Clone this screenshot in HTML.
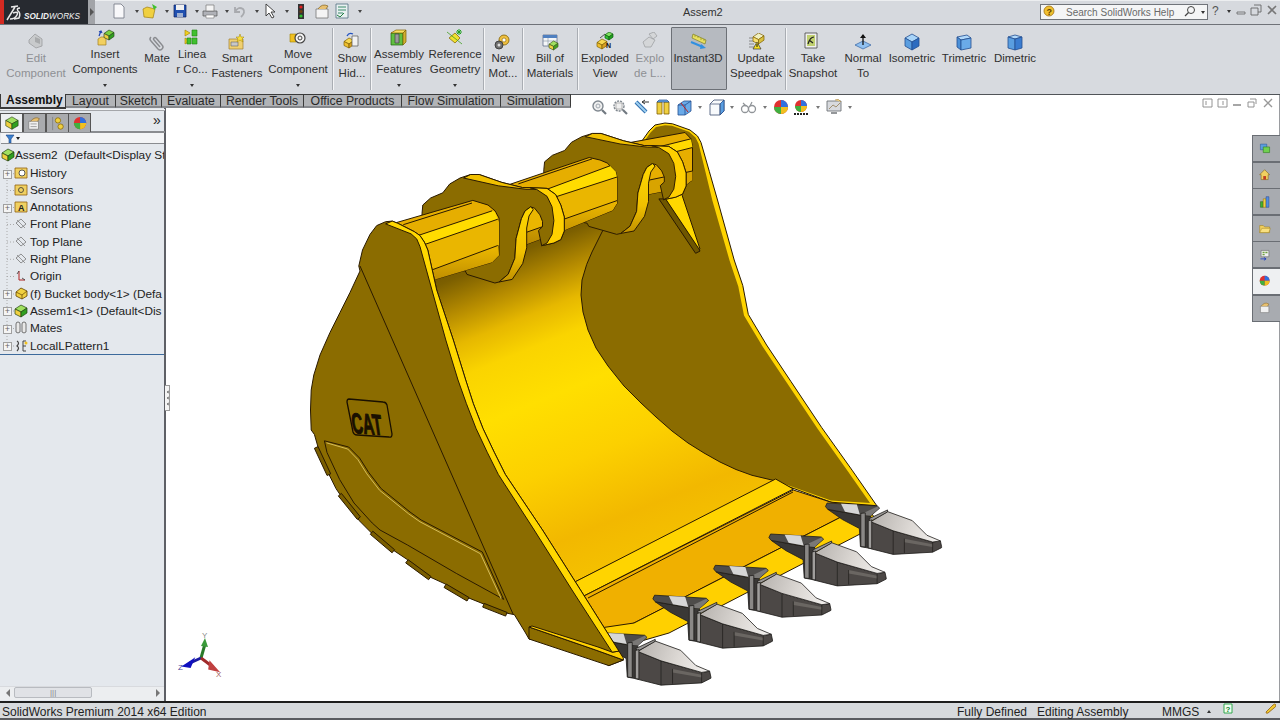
<!DOCTYPE html>
<html><head><meta charset="utf-8"><style>
*{margin:0;padding:0;box-sizing:border-box}
html,body{width:1280px;height:720px;overflow:hidden;background:#fff;font-family:"Liberation Sans",sans-serif;color:#222}
.a{position:absolute}
#title{left:0;top:0;width:1280px;height:25px;background:#d6d9de;border-top:1px solid #eceef0;border-bottom:1px solid #6f7278}
#logo{left:0;top:0;width:88px;height:24px;background:#272a30;border-left:4px solid #d42a22}
#logoarr{left:88px;top:0;width:7px;height:24px;background:#a2a4a8}
#tb{left:0;top:25px;width:1280px;height:70px;background:#d7dadf;border-bottom:1px solid #505458}
.l{position:absolute;font-size:11.5px;line-height:15px;color:#303030;white-space:nowrap;transform:translateX(-50%)}
.g{color:#8e9094}
.sep{position:absolute;top:28px;width:2px;height:62px;border-left:1px solid #a9adb3;border-right:1px solid #f4f5f7}
.dd{position:absolute;width:0;height:0;border-left:2px solid transparent;border-right:2px solid transparent;border-top:3px solid #333}
#tabs{left:0;top:94px;width:570px;height:14px;background:#d7dadf}
.tab{position:absolute;top:94px;height:14px;font-size:12.3px;line-height:12px;color:#2a2a2a;background:#b2b4b7;border:1px solid #3a3a3a;border-bottom:2px solid #86888c;border-left:none;border-top-width:1px;text-align:center}
#panel{left:0;top:108px;width:165px;height:593px;background:#e4e8ed}
#pborder{left:164px;top:107px;width:2px;height:594px;background:#5e6066}
#status{left:0;top:701px;width:1280px;height:19px;background:#d7dadd;border-top:2px solid #1e1e1e;border-bottom:2px solid #5a5c60}
.st{position:absolute;top:704px;font-size:12px;line-height:16px;color:#222;white-space:nowrap}
.tr{position:absolute;left:30px;font-size:11.8px;line-height:15px;color:#222;white-space:nowrap}
.ptab{position:absolute;top:113px;width:23px;height:19px;background:#a9abae;border:1px solid #555;border-bottom:none}
.tp{position:absolute;left:1252px;width:28px;height:27px;background:#a8abb0;border:1px solid #6a6e74;border-right:none}
</style></head><body>
<div id="title" class="a"></div>
<div id="logo" class="a"></div>
<div id="logoarr" class="a"></div>
<div id="tb" class="a"></div>
<div id="tabs" class="a"></div>
<div id="panel" class="a"></div>
<div id="pborder" class="a"></div>
<div id="status" class="a"></div>
<div class="a" style="left:683px;top:5px;font-size:11px;line-height:14px;color:#333">Assem2</div>
<svg class="a" style="left:4px;top:0" width="84" height="24" viewBox="0 0 84 24"><path d="M3,20 L11,7 M7,7 L14,6 M9,13 Q15,11 13,15 Q11,19 6,19 M16,8 Q12,8 14,11 Q17,13 15,18 L10,19" fill="none" stroke="#e8e8e8" stroke-width="1.5"/><text x="20" y="18.5" font-family="Liberation Sans" font-style="italic" font-size="9.8" fill="#f2f2f2" textLength="56" lengthAdjust="spacingAndGlyphs"><tspan font-weight="bold">SOLID</tspan>WORKS</text></svg>
<svg class="a" style="left:89px;top:8px" width="6" height="8"><path d="M1,0 L5,4 L1,8 Z" fill="#555"/></svg>
<div class="a" style="left:671px;top:27px;width:56px;height:63px;background:#b6bac0;border:1px solid #6c7076;border-radius:1px"></div>
<div class="l g" style="left:36px;top:51px">Edit</div>
<div class="l g" style="left:36px;top:66px">Component</div>
<div class="l" style="left:105px;top:47px">Insert</div>
<div class="l" style="left:105px;top:62px">Components</div>
<div class="l" style="left:157px;top:51px">Mate</div>
<div class="l" style="left:192px;top:47px">Linea</div>
<div class="l" style="left:192px;top:62px">r Co...</div>
<div class="l" style="left:237px;top:51px">Smart</div>
<div class="l" style="left:237px;top:66px">Fasteners</div>
<div class="l" style="left:298px;top:47px">Move</div>
<div class="l" style="left:298px;top:62px">Component</div>
<div class="l" style="left:352px;top:51px">Show</div>
<div class="l" style="left:352px;top:66px">Hid...</div>
<div class="l" style="left:399px;top:47px">Assembly</div>
<div class="l" style="left:399px;top:62px">Features</div>
<div class="l" style="left:455px;top:47px">Reference</div>
<div class="l" style="left:455px;top:62px">Geometry</div>
<div class="l" style="left:503px;top:51px">New</div>
<div class="l" style="left:503px;top:66px">Mot...</div>
<div class="l" style="left:550px;top:51px">Bill of</div>
<div class="l" style="left:550px;top:66px">Materials</div>
<div class="l" style="left:605px;top:51px">Exploded</div>
<div class="l" style="left:605px;top:66px">View</div>
<div class="l g" style="left:650px;top:51px">Explo</div>
<div class="l g" style="left:650px;top:66px">de L...</div>
<div class="l" style="left:698px;top:51px">Instant3D</div>
<div class="l" style="left:756px;top:51px">Update</div>
<div class="l" style="left:756px;top:66px">Speedpak</div>
<div class="l" style="left:813px;top:51px">Take</div>
<div class="l" style="left:813px;top:66px">Snapshot</div>
<div class="l" style="left:863px;top:51px">Normal</div>
<div class="l" style="left:863px;top:66px">To</div>
<div class="l" style="left:912px;top:51px">Isometric</div>
<div class="l" style="left:964px;top:51px">Trimetric</div>
<div class="l" style="left:1015px;top:51px">Dimetric</div>
<div class="dd" style="left:103px;top:84px"></div>
<div class="dd" style="left:190px;top:84px"></div>
<div class="dd" style="left:296px;top:84px"></div>
<div class="dd" style="left:397px;top:84px"></div>
<div class="dd" style="left:453px;top:84px"></div>
<div class="sep" style="left:332px"></div>
<div class="sep" style="left:370px"></div>
<div class="sep" style="left:483px"></div>
<div class="sep" style="left:522px"></div>
<div class="sep" style="left:577px"></div>
<div class="sep" style="left:785px"></div>
<svg class="a" style="left:27.0px;top:32.0px" width="18" height="18" viewBox="0 0 18 18"><path d="M2,8 L8,2 L15,7 L15,14 L9,16 L2,11 Z" fill="#c8cacc" stroke="#9a9c9e" stroke-width="0.8"/><path d="M8,5 L13,7 L13,12 L8,10 Z" fill="#a8aaac"/></svg>
<svg class="a" style="left:97.0px;top:29.0px" width="18" height="18" viewBox="0 0 18 18"><path d="M1,10 L4,8 L9,8 L9,16 L1,16 Z" fill="#f2d060" stroke="#a08020" stroke-width="0.7"/><path d="M2,7 L4,2 M2,3 L4,2 L5,4" fill="none" stroke="#1a40b0" stroke-width="1.2"/><path d="M7,4.5 L12.0,1 L17,3.5 L12.0,7.0 Z" fill="#7ad040" stroke="#2a4a20" stroke-width="0.7" stroke-linejoin="round"/><path d="M7,4.5 L12.0,7.0 L12.0,11 L7,8.5 Z" fill="#f0d040" stroke="#2a4a20" stroke-width="0.7" stroke-linejoin="round"/><path d="M12.0,7.0 L17,3.5 L17,7.5 L12.0,11 Z" fill="#30a020" stroke="#2a4a20" stroke-width="0.7" stroke-linejoin="round"/></svg>
<svg class="a" style="left:147.0px;top:34.0px" width="18" height="18" viewBox="0 0 18 18"><path d="M4,3 Q2,5 4,7 L11,15 Q13,17 15,15 Q17,13 15,11 L9,4 Q8,3 7,4 Q6,5 7,6 L13,13" fill="none" stroke="#8a8c90" stroke-width="1.5"/></svg>
<svg class="a" style="left:183.0px;top:29.0px" width="18" height="18" viewBox="0 0 18 18"><path d="M2,1 L7,4 L2,7 Z M2,9 L7,12 L2,15 Z" fill="#f0d020" stroke="#a08000" stroke-width="0.6"/><path d="M9,1 h5 v6 h-5 Z M9,9 h5 v6 h-5 Z M4,9 h4 v6 h-4 Z" fill="#40c030" stroke="#208010" stroke-width="0.6"/></svg>
<svg class="a" style="left:228.0px;top:33.0px" width="18" height="18" viewBox="0 0 18 18"><path d="M1,6 L15,6 L15,16 L1,16 Z" fill="#f0d070" stroke="#a08030" stroke-width="0.7"/><path d="M3,9 h7 v4 h-7 Z" fill="#c8c8c8" stroke="#666" stroke-width="0.6"/><path d="M12,1 L13,4 L16,4 L14,6 L15,9 L12,7 L9,9 L10,6 L8,4 L11,4 Z" fill="#f8e040" stroke="#a08000" stroke-width="0.5"/></svg>
<svg class="a" style="left:289.0px;top:29.0px" width="18" height="18" viewBox="0 0 18 18"><path d="M1,5 L7,5 L7,13 L1,13 Z" fill="#f0c020" stroke="#a08000" stroke-width="0.6"/><circle cx="11" cy="9" r="5" fill="#f4f4f4" stroke="#444" stroke-width="1.2"/><circle cx="11" cy="9" r="2" fill="none" stroke="#444" stroke-width="1"/></svg>
<svg class="a" style="left:343.0px;top:32.0px" width="18" height="18" viewBox="0 0 18 18"><path d="M1,9.5 L6.0,6 L11,8.5 L6.0,12.0 Z" fill="#f8d850" stroke="#806000" stroke-width="0.7" stroke-linejoin="round"/><path d="M1,9.5 L6.0,12.0 L6.0,16 L1,13.5 Z" fill="#f0c030" stroke="#806000" stroke-width="0.7" stroke-linejoin="round"/><path d="M6.0,12.0 L11,8.5 L11,12.5 L6.0,16 Z" fill="#d8a020" stroke="#806000" stroke-width="0.7" stroke-linejoin="round"/><path d="M9,4 h6 v10 h-6 Z" fill="#f2f2f2" stroke="#555" stroke-width="0.7"/><path d="M4,4 Q6,0 10,2" fill="none" stroke="#2050c0" stroke-width="1.3"/></svg>
<svg class="a" style="left:390.0px;top:29.0px" width="18" height="18" viewBox="0 0 18 18"><path d="M1,4 L13,4 L13,16 L1,16 Z" fill="#60c040" stroke="#206010" stroke-width="0.7"/><path d="M1,4 L6,1 L16,1 L13,4 Z" fill="#f8e060" stroke="#806000" stroke-width="0.7"/><path d="M13,4 L16,1 L16,13 L13,16 Z" fill="#d0b030" stroke="#806000" stroke-width="0.7"/><path d="M5,5 h4 v9 h-4 Z" fill="#9a9a9a" stroke="#444" stroke-width="0.7"/></svg>
<svg class="a" style="left:446.0px;top:29.0px" width="18" height="18" viewBox="0 0 18 18"><path d="M3,9 L9,4 L14,9 L9,14 Z" fill="#f0e030" stroke="#806000" stroke-width="0.7"/><path d="M1,3 L16,15" stroke="#40a020" stroke-width="0.8"/><path d="M13,0 v6 M10,3 h6 M11,1 l4,4 M15,1 l-4,4" stroke="#20a020" stroke-width="1"/></svg>
<svg class="a" style="left:494.0px;top:33.0px" width="18" height="18" viewBox="0 0 18 18"><circle cx="10" cy="7" r="5" fill="#f0c040" stroke="#806000" stroke-width="0.8"/><circle cx="10" cy="7" r="2" fill="#fff" stroke="#806000" stroke-width="0.6"/><circle cx="5" cy="12" r="4" fill="#707070" stroke="#303030" stroke-width="0.8"/><circle cx="5" cy="12" r="1.5" fill="#ddd"/></svg>
<svg class="a" style="left:541.0px;top:33.0px" width="18" height="18" viewBox="0 0 18 18"><path d="M2,2 h14 v11 h-14 Z" fill="#f4f6f8" stroke="#506080" stroke-width="0.7"/><path d="M2,2 h14 v3 h-14 Z" fill="#5080c0"/><path d="M2,8 h14 M7,5 v8" stroke="#8090a0" stroke-width="0.6"/><path d="M8,11.15 L12.5,8 L17,10.25 L12.5,13.399999999999999 Z" fill="#a0e060" stroke="#406020" stroke-width="0.7" stroke-linejoin="round"/><path d="M8,11.15 L12.5,13.399999999999999 L12.5,17 L8,14.75 Z" fill="#f0d040" stroke="#406020" stroke-width="0.7" stroke-linejoin="round"/><path d="M12.5,13.399999999999999 L17,10.25 L17,13.850000000000001 L12.5,17 Z" fill="#40a020" stroke="#406020" stroke-width="0.7" stroke-linejoin="round"/></svg>
<svg class="a" style="left:596.0px;top:32.0px" width="18" height="18" viewBox="0 0 18 18"><path d="M1,10.5 L6.0,7 L11,9.5 L6.0,13.0 Z" fill="#f8d850" stroke="#806000" stroke-width="0.7" stroke-linejoin="round"/><path d="M1,10.5 L6.0,13.0 L6.0,17 L1,14.5 Z" fill="#f0c030" stroke="#806000" stroke-width="0.7" stroke-linejoin="round"/><path d="M6.0,13.0 L11,9.5 L11,13.5 L6.0,17 Z" fill="#d8a020" stroke="#806000" stroke-width="0.7" stroke-linejoin="round"/><path d="M4,6 L9,2" stroke="#555" stroke-width="1"/><path d="M9,2.8 L13.0,0 L17,2.0 L13.0,4.8 Z" fill="#80e060" stroke="#106010" stroke-width="0.7" stroke-linejoin="round"/><path d="M9,2.8 L13.0,4.8 L13.0,8 L9,6.0 Z" fill="#30c030" stroke="#106010" stroke-width="0.7" stroke-linejoin="round"/><path d="M13.0,4.8 L17,2.0 L17,5.2 L13.0,8 Z" fill="#20a020" stroke="#106010" stroke-width="0.7" stroke-linejoin="round"/><text x="10" y="16" font-size="7" font-weight="bold" fill="#111" font-family="Liberation Sans">N</text></svg>
<svg class="a" style="left:641.0px;top:32.0px" width="18" height="18" viewBox="0 0 18 18"><path d="M2,10 L8,5 L14,8 L10,15 L4,15 Z M8,2 L13,0 L16,4 L12,7 Z" fill="#d4d6d8" stroke="#a0a2a4" stroke-width="0.8"/></svg>
<svg class="a" style="left:690.0px;top:32.0px" width="18" height="18" viewBox="0 0 18 18"><path d="M3,2 L16,8 L15,12 L2,6 Z" fill="#e8e060" stroke="#808020" stroke-width="0.7"/><path d="M5,3 v2 M8,4 v2 M11,6 v2 M14,7 v2" stroke="#808020" stroke-width="0.6"/><path d="M1,10 L13,15" stroke="#3090e0" stroke-width="2"/><path d="M11,12 L16,16 L10,17 Z" fill="#3090e0"/></svg>
<svg class="a" style="left:748.0px;top:33.0px" width="18" height="18" viewBox="0 0 18 18"><path d="M1,5 h5 M1,8 h5 M1,11 h5 M1,14 h5" stroke="#666" stroke-width="0.7"/><path d="M5,3.8499999999999996 L10.5,0 L16,2.75 L10.5,6.6 Z" fill="#f0f0c0" stroke="#806000" stroke-width="0.7" stroke-linejoin="round"/><path d="M5,3.8499999999999996 L10.5,6.6 L10.5,11 L5,8.25 Z" fill="#f8e070" stroke="#806000" stroke-width="0.7" stroke-linejoin="round"/><path d="M10.5,6.6 L16,2.75 L16,7.15 L10.5,11 Z" fill="#d8c040" stroke="#806000" stroke-width="0.7" stroke-linejoin="round"/><path d="M9,9 L13,16 L5,16 Z" fill="#f8e020" stroke="#333" stroke-width="0.7"/><path d="M9,11 v3" stroke="#111" stroke-width="1"/></svg>
<svg class="a" style="left:803.0px;top:32.0px" width="18" height="18" viewBox="0 0 18 18"><path d="M2,1 h12 v15 h-12 Z" fill="#f0f0f0" stroke="#444" stroke-width="0.8"/><path d="M4,3 h8 v11 h-8 Z" fill="#c0d070"/><path d="M5,12 Q7,5 11,5 M6,8 L10,11" stroke="#222" stroke-width="1.2" fill="none"/></svg>
<svg class="a" style="left:854.0px;top:33.0px" width="18" height="18" viewBox="0 0 18 18"><path d="M1,12 L9,8 L17,12 L9,16 Z" fill="#90c0f0" stroke="#3060a0" stroke-width="0.7"/><path d="M9,12 V2" stroke="#111" stroke-width="1.3"/><path d="M6,5 L9,1 L12,5 Z" fill="#111"/></svg>
<svg class="a" style="left:903.0px;top:33.0px" width="18" height="18" viewBox="0 0 18 18"><path d="M2,5 L9,1 L16,5 L9,9 Z" fill="#a8d4f8" stroke="#234e90" stroke-width="0.8" stroke-linejoin="round"/><path d="M2,5 L9,9 L9,17 L2,13 Z" fill="#5a9ee0" stroke="#234e90" stroke-width="0.8" stroke-linejoin="round"/><path d="M9,9 L16,5 L16,13 L9,17 Z" fill="#2d6cc0" stroke="#234e90" stroke-width="0.8" stroke-linejoin="round"/></svg>
<svg class="a" style="left:955.0px;top:33.0px" width="18" height="18" viewBox="0 0 18 18"><path d="M2,4 L12,2 L16,5 L6,7 Z" fill="#b0d8fa" stroke="#234e90" stroke-width="0.8"/><path d="M2,4 L6,7 L6,17 L2,14 Z" fill="#4a90d8" stroke="#234e90" stroke-width="0.8"/><path d="M6,7 L16,5 L16,15 L6,17 Z" fill="#6aaae8" stroke="#234e90" stroke-width="0.8"/></svg>
<svg class="a" style="left:1006.0px;top:33.0px" width="18" height="18" viewBox="0 0 18 18"><path d="M2,4 L9,2 L16,4 L9,6 Z" fill="#b0d8fa" stroke="#234e90" stroke-width="0.8"/><path d="M2,4 L9,6 L9,17 L2,15 Z" fill="#5a9ee0" stroke="#234e90" stroke-width="0.8"/><path d="M9,6 L16,4 L16,15 L9,17 Z" fill="#3a7cd0" stroke="#234e90" stroke-width="0.8"/></svg>
<svg class="a" style="left:111.0px;top:3.0px" width="16" height="16" viewBox="0 0 16 16"><path d="M3,1 L10,1 L13,4 L13,15 L3,15 Z" fill="#f8f8fa" stroke="#707480" stroke-width="0.8"/></svg>
<svg class="a" style="left:142.0px;top:3.0px" width="16" height="16" viewBox="0 0 16 16"><path d="M1,6 L5,4 L13,6 L11,15 L2,14 Z" fill="#f0d040" stroke="#a08010" stroke-width="0.7"/><path d="M10,1 L15,4 L12,7 Z" fill="#40c030"/></svg>
<svg class="a" style="left:172.0px;top:3.0px" width="16" height="16" viewBox="0 0 16 16"><path d="M2,2 h12 v12 h-12 Z" fill="#2050b0" stroke="#102060" stroke-width="0.7"/><path d="M4,2 h8 v5 h-8 Z" fill="#f0f0f0"/><path d="M5,10 h6 v4 h-6 Z" fill="#a0b0d0"/></svg>
<svg class="a" style="left:202.0px;top:3.0px" width="16" height="16" viewBox="0 0 16 16"><path d="M1,8 h14 v5 h-14 Z" fill="#b0b2b8" stroke="#555" stroke-width="0.7"/><path d="M4,2 h8 v6 h-8 Z" fill="#f4f4f4" stroke="#777" stroke-width="0.7"/><path d="M4,12 h8 v3 h-8 Z" fill="#fff" stroke="#777" stroke-width="0.6"/></svg>
<svg class="a" style="left:231.0px;top:3.0px" width="16" height="16" viewBox="0 0 16 16"><path d="M4,4 L4,9 L9,9 M4,9 Q7,3 12,6 Q15,9 10,14" fill="none" stroke="#a8aaae" stroke-width="1.8"/></svg>
<svg class="a" style="left:262.0px;top:3.0px" width="16" height="16" viewBox="0 0 16 16"><path d="M4,1 L4,13 L7,10 L10,15 L12,14 L9,9 L13,9 Z" fill="#fff" stroke="#333" stroke-width="0.9"/></svg>
<svg class="a" style="left:293.0px;top:3.0px" width="16" height="16" viewBox="0 0 16 16"><path d="M5,1 h6 v15 h-6 Z" fill="#333" rx="2"/><circle cx="8" cy="4" r="1.6" fill="#e02020"/><circle cx="8" cy="8.5" r="1.6" fill="#704010"/><circle cx="8" cy="13" r="1.6" fill="#30c030"/></svg>
<svg class="a" style="left:314.0px;top:3.0px" width="16" height="16" viewBox="0 0 16 16"><path d="M2,6 h12 v9 h-12 Z" fill="#f4f4f4" stroke="#777" stroke-width="0.8"/><path d="M4,6 Q8,0 14,3 L12,6" fill="#e8c070" stroke="#806020" stroke-width="0.7"/></svg>
<svg class="a" style="left:334.0px;top:3.0px" width="16" height="16" viewBox="0 0 16 16"><path d="M2,1 h12 v14 h-12 Z" fill="#e8f0f0" stroke="#507080" stroke-width="0.8"/><path d="M4,4 h8 M4,7 h8 M4,10 h5" stroke="#3a8a6a" stroke-width="1"/><path d="M3,12 L6,14 L10,10" stroke="#208040" stroke-width="1" fill="none"/></svg>
<div class="dd" style="left:135px;top:10px;border-top-color:#444"></div>
<div class="dd" style="left:165px;top:10px;border-top-color:#444"></div>
<div class="dd" style="left:195px;top:10px;border-top-color:#444"></div>
<div class="dd" style="left:225px;top:10px;border-top-color:#444"></div>
<div class="dd" style="left:255px;top:10px;border-top-color:#444"></div>
<div class="dd" style="left:285px;top:10px;border-top-color:#444"></div>
<div class="dd" style="left:358px;top:10px;border-top-color:#444"></div>
<div class="a" style="left:1040px;top:4px;width:168px;height:16px;background:#f4f5f6;border:1px solid #70747a"></div>
<div class="a" style="left:1066px;top:6px;font-size:10px;line-height:13px;color:#6a6a6a">Search SolidWorks Help</div>
<svg class="a" style="left:1043.0px;top:5.0px" width="12" height="12" viewBox="0 0 12 12"><circle cx="6" cy="6" r="5" fill="#f0c030" stroke="#a07010" stroke-width="0.8"/><text x="3.5" y="9.5" font-size="9" font-weight="bold" fill="#604000" font-family="Liberation Sans">?</text></svg>
<svg class="a" style="left:1184.0px;top:5.0px" width="12" height="12" viewBox="0 0 12 12"><circle cx="7" cy="5" r="3.5" fill="none" stroke="#444" stroke-width="1"/><path d="M4.5,7.5 L1,11" stroke="#444" stroke-width="1.3"/></svg>
<div class="dd" style="left:1201px;top:11px"></div>
<svg class="a" style="left:1211.0px;top:4.0px" width="10" height="12" viewBox="0 0 10 12"><text x="1" y="11" font-size="12" fill="#555" font-family="Liberation Sans">?</text></svg>
<div class="dd" style="left:1227px;top:10px"></div>
<svg class="a" style="left:1236.0px;top:6.0px" width="10" height="10" viewBox="0 0 10 10"><path d="M1,6 h8 v2 h-8 Z" fill="none" stroke="#666" stroke-width="0.8"/></svg>
<svg class="a" style="left:1250.0px;top:4.0px" width="12" height="12" viewBox="0 0 12 12"><path d="M1,4 h7 v7 h-7 Z M4,1 h7 v7 h-3" fill="none" stroke="#666" stroke-width="0.9"/></svg>
<svg class="a" style="left:1267.0px;top:5.0px" width="10" height="10" viewBox="0 0 10 10"><path d="M1,1 L9,9 M9,1 L1,9" stroke="#777" stroke-width="1.6"/></svg>
<div class="a" style="left:0;top:109px;width:165px;height:2px;background:#a4a6aa;border-top:1px solid #f0f2f4"></div>
<div class="a" style="left:0px;top:94px;width:66px;height:15px;background:#d7dadf;border-left:1px solid #3a3a3a;border-right:1px solid #3a3a3a;border-bottom:2px solid #3a3a3a;font-size:12px;line-height:13px;font-weight:bold;color:#111;padding-left:5px">Assembly</div>
<div class="tab" style="left:66px;width:50px">Layout</div>
<div class="tab" style="left:116px;width:46px">Sketch</div>
<div class="tab" style="left:162px;width:59px">Evaluate</div>
<div class="tab" style="left:221px;width:83px">Render Tools</div>
<div class="tab" style="left:304px;width:98px">Office Products</div>
<div class="tab" style="left:402px;width:99px">Flow Simulation</div>
<div class="tab" style="left:501px;width:70px">Simulation</div>
<svg class="a" style="left:590.5px;top:98.5px" width="17" height="17" viewBox="0 0 17 17"><circle cx="7" cy="7" r="5" fill="#f0f0f0" stroke="#808890" stroke-width="1.4"/><circle cx="7" cy="7" r="2" fill="none" stroke="#a0a8b0" stroke-width="1"/><path d="M11,11 L15,15" stroke="#707880" stroke-width="2.2"/></svg>
<svg class="a" style="left:611.5px;top:98.5px" width="17" height="17" viewBox="0 0 17 17"><circle cx="7" cy="7" r="5" fill="#f0f0f0" stroke="#808890" stroke-width="1.4" stroke-dasharray="2 1"/><path d="M11,11 L15,15" stroke="#707880" stroke-width="2.2"/><path d="M4,4 h6 v6 h-6 Z" fill="none" stroke="#909090" stroke-width="0.6"/></svg>
<svg class="a" style="left:633.5px;top:98.5px" width="17" height="17" viewBox="0 0 17 17"><path d="M2,3 L12,13" stroke="#3070b0" stroke-width="4"/><path d="M2,3 L12,13" stroke="#a0d0f0" stroke-width="2"/><path d="M8,3 h7 M8,3 l3,-2 M8,3 l3,2" stroke="#333" stroke-width="1" fill="none"/></svg>
<svg class="a" style="left:654.5px;top:98.5px" width="17" height="17" viewBox="0 0 17 17"><path d="M2,3 h5 v12 h-5 Z" fill="#f0d040" stroke="#806000" stroke-width="0.8"/><path d="M9,3 h5 v12 h-5 Z" fill="#f0d040" stroke="#806000" stroke-width="0.8"/><path d="M4,1 L12,1 L14,3 L2,3 Z" fill="#6aaae8" stroke="#234e90" stroke-width="0.7"/></svg>
<svg class="a" style="left:675.5px;top:98.5px" width="17" height="17" viewBox="0 0 17 17"><path d="M2,6 L8,2 L15,2 L15,12 L9,16 L2,16 Z" fill="#6aaae8" stroke="#234e90" stroke-width="0.8"/><path d="M2,6 h7 v10 M9,6 L15,2" fill="none" stroke="#234e90" stroke-width="0.8"/><path d="M5,4 L12,13" stroke="#c02020" stroke-width="1"/></svg>
<svg class="a" style="left:707.5px;top:98.5px" width="17" height="17" viewBox="0 0 17 17"><path d="M2,5 L6,1 L16,1 L16,12 L12,16 L2,16 Z" fill="#f8fafc" stroke="#506080" stroke-width="0.9"/><path d="M12,5 L16,1 L16,12 L12,16 Z" fill="#5a9ee0" stroke="#234e90" stroke-width="0.8"/><path d="M2,5 h10 v11" fill="none" stroke="#506080" stroke-width="0.8"/></svg>
<svg class="a" style="left:739.5px;top:98.5px" width="17" height="17" viewBox="0 0 17 17"><circle cx="5" cy="10" r="3.5" fill="none" stroke="#909498" stroke-width="1.3"/><circle cx="12" cy="10" r="3.5" fill="none" stroke="#909498" stroke-width="1.3"/><path d="M3,4 L6,7 M12,3 L10,7" stroke="#909498" stroke-width="1.2"/></svg>
<svg class="a" style="left:772.5px;top:98.5px" width="17" height="17" viewBox="0 0 17 17"><circle cx="8" cy="8" r="7" fill="#e03030"/><path d="M8,8 L8,1 A7,7 0 0,1 15,8 Z" fill="#3070e0"/><path d="M8,8 L15,8 A7,7 0 0,1 8,15 Z" fill="#f0c020"/><path d="M8,8 L8,15 A7,7 0 0,1 1,8 Z" fill="#40b040"/></svg>
<svg class="a" style="left:792.5px;top:98.5px" width="17" height="17" viewBox="0 0 17 17"><circle cx="8" cy="7" r="6" fill="#e03030"/><path d="M8,7 L8,1 A6,6 0 0,1 14,7 Z" fill="#3070e0"/><path d="M8,7 L14,7 A6,6 0 0,1 8,13 Z" fill="#f0c020"/><path d="M8,7 L8,13 A6,6 0 0,1 2,7 Z" fill="#40b040"/><path d="M1,15 h14" stroke="#222" stroke-width="2" stroke-dasharray="2 1"/></svg>
<svg class="a" style="left:825.5px;top:98.5px" width="17" height="17" viewBox="0 0 17 17"><path d="M1,2 h14 v10 h-14 Z" fill="#d8dade" stroke="#707478" stroke-width="0.9"/><path d="M3,10 L7,6 L10,8 L14,4" fill="none" stroke="#a09070" stroke-width="1"/><path d="M9,1 Q13,-1 15,3" fill="#f0d080" stroke="#a08040" stroke-width="0.6"/><path d="M5,14 h6" stroke="#707478" stroke-width="1.5"/></svg>
<div class="dd" style="left:698px;top:106px;border-top-color:#777"></div>
<div class="dd" style="left:730px;top:106px;border-top-color:#777"></div>
<div class="dd" style="left:763px;top:106px;border-top-color:#777"></div>
<div class="dd" style="left:816px;top:106px;border-top-color:#777"></div>
<div class="dd" style="left:848px;top:106px;border-top-color:#777"></div>
<svg class="a" style="left:1201.5px;top:97.5px" width="11" height="11" viewBox="0 0 11 11"><path d="M1,1 h9 v8 h-9 Z M4,3 v4" fill="none" stroke="#888" stroke-width="0.9"/></svg>
<svg class="a" style="left:1216.5px;top:97.5px" width="11" height="11" viewBox="0 0 11 11"><path d="M1,1 h9 v8 h-9 Z M6,3 v4" fill="none" stroke="#888" stroke-width="0.9"/></svg>
<svg class="a" style="left:1231.5px;top:97.5px" width="11" height="11" viewBox="0 0 11 11"><path d="M1,7 h8" stroke="#888" stroke-width="1.5"/></svg>
<svg class="a" style="left:1246.5px;top:97.5px" width="11" height="11" viewBox="0 0 11 11"><path d="M1,4 h6 v5 h-6 Z M3,1 h6 v5" fill="none" stroke="#888" stroke-width="0.9"/></svg>
<svg class="a" style="left:1262.5px;top:97.5px" width="11" height="11" viewBox="0 0 11 11"><path d="M1,1 L9,9 M9,1 L1,9" stroke="#999" stroke-width="1.4"/></svg>
<div class="a" style="left:1279px;top:95px;width:1px;height:606px;background:#9a9ca0"></div>
<div class="tp" style="top:135.0px;background:#a8abb0"></div>
<svg class="a" style="left:1259.0px;top:142.3px" width="12" height="12" viewBox="0 0 17 17"><path d="M2,3 h9 v8 h-9 Z" fill="#5a9ee0" stroke="#235090" stroke-width="0.7"/><path d="M6,7 h9 v8 h-9 Z" fill="#70d050" stroke="#207010" stroke-width="0.7"/></svg>
<div class="tp" style="top:161.6px;background:#a8abb0"></div>
<svg class="a" style="left:1259.0px;top:168.9px" width="12" height="12" viewBox="0 0 17 17"><path d="M8,1 L15,8 L13,8 L13,15 L3,15 L3,8 L1,8 Z" fill="#f0d060" stroke="#806010" stroke-width="0.8"/><path d="M6,10 h4 v5 h-4 Z" fill="#c04020"/></svg>
<div class="tp" style="top:188.2px;background:#a8abb0"></div>
<svg class="a" style="left:1259.0px;top:195.5px" width="12" height="12" viewBox="0 0 17 17"><path d="M2,8 h4 v8 h-4 Z" fill="#40b030" stroke="#205010" stroke-width="0.6"/><path d="M6,4 h4 v12 h-4 Z" fill="#f0d040" stroke="#806000" stroke-width="0.6"/><path d="M10,1 h4 v15 h-4 Z" fill="#5090e0" stroke="#203080" stroke-width="0.6"/></svg>
<div class="tp" style="top:214.8px;background:#a8abb0"></div>
<svg class="a" style="left:1259.0px;top:222.10000000000002px" width="12" height="12" viewBox="0 0 17 17"><path d="M1,5 L6,5 L8,7 L15,7 L15,15 L1,15 Z" fill="#f0d060" stroke="#a08020" stroke-width="0.8"/><path d="M1,15 L4,9 L16,9 L14,15 Z" fill="#f8e080" stroke="#a08020" stroke-width="0.7"/></svg>
<div class="tp" style="top:241.4px;background:#a8abb0"></div>
<svg class="a" style="left:1259.0px;top:248.70000000000002px" width="12" height="12" viewBox="0 0 17 17"><path d="M3,2 h11 v9 h-11 Z" fill="#f0f0f0" stroke="#606060" stroke-width="0.8"/><path d="M5,4 h3 v2 h-3 Z M9,4 h3 v2 h-3 Z M5,7 h3 v2 h-3 Z" fill="#70a040"/><path d="M2,14 h8 M7,12 l3,2 l-3,2" stroke="#2040c0" stroke-width="1.2" fill="none"/></svg>
<div class="tp" style="top:268.0px;background:#eef0f2"></div>
<svg class="a" style="left:1259.0px;top:275.3px" width="12" height="12" viewBox="0 0 17 17"><circle cx="8" cy="8" r="7" fill="#e03030"/><path d="M8,8 L8,1 A7,7 0 0,1 15,8 Z" fill="#3070e0"/><path d="M8,8 L15,8 A7,7 0 0,1 8,15 Z" fill="#f0c020"/><path d="M8,8 L8,15 A7,7 0 0,1 1,8 Z" fill="#40b040"/></svg>
<div class="tp" style="top:294.6px;background:#a8abb0"></div>
<svg class="a" style="left:1259.0px;top:301.90000000000003px" width="12" height="12" viewBox="0 0 17 17"><path d="M2,6 h12 v9 h-12 Z" fill="#f0f0f0" stroke="#777" stroke-width="0.8"/><path d="M3,6 Q8,-1 14,3 L12,6" fill="#e8c070" stroke="#806020" stroke-width="0.7"/></svg>
<div class="a" style="left:0;top:131px;width:165px;height:2px;background:#8a8c90"></div>
<div class="ptab" style="left:0px;background:#eef0f2"></div>
<div class="ptab" style="left:23px;background:#a9abae"></div>
<div class="ptab" style="left:46px;background:#a9abae"></div>
<div class="ptab" style="left:68px;background:#a9abae"></div>
<svg class="a" style="left:3.5px;top:115.5px" width="15" height="15" viewBox="0 0 17 17"><path d="M2,5 L9,1 L16,5 L9,9 Z" fill="#a0e060" stroke="#204010" stroke-width="0.7"/><path d="M2,5 L9,9 L9,15 L2,11 Z" fill="#f0d040" stroke="#204010" stroke-width="0.7"/><path d="M9,9 L16,5 L16,11 L9,15 Z" fill="#30a020" stroke="#204010" stroke-width="0.7"/></svg>
<svg class="a" style="left:26.5px;top:115.5px" width="15" height="15" viewBox="0 0 17 17"><path d="M2,6 h11 v9 h-11 Z" fill="#f0f0f0" stroke="#777" stroke-width="0.8"/><path d="M4,9 h7 M4,12 h7" stroke="#999"/><path d="M4,6 Q9,0 14,3 L12,6" fill="#e8c070" stroke="#806020" stroke-width="0.7"/></svg>
<svg class="a" style="left:49.5px;top:115.5px" width="15" height="15" viewBox="0 0 17 17"><path d="M3,1 v15" stroke="#777" stroke-width="0.8"/><circle cx="9" cy="5" r="3" fill="#f0d040" stroke="#806000" stroke-width="0.8"/><circle cx="12" cy="12" r="3" fill="#f0d040" stroke="#806000" stroke-width="0.8"/></svg>
<svg class="a" style="left:72.5px;top:115.5px" width="15" height="15" viewBox="0 0 17 17"><circle cx="8" cy="8" r="7" fill="#e03030"/><path d="M8,8 L8,1 A7,7 0 0,1 15,8 Z" fill="#3070e0"/><path d="M8,8 L15,8 A7,7 0 0,1 8,15 Z" fill="#f0c020"/><path d="M8,8 L8,15 A7,7 0 0,1 1,8 Z" fill="#40b040"/></svg>
<div class="a" style="left:153px;top:113px;font-size:14px;line-height:14px;color:#222">&#187;</div>
<div class="a" style="left:1px;top:133px;width:163px;height:11px;background:#f3f4f6;border-bottom:1px solid #8a8c90"></div>
<svg class="a" style="left:5.0px;top:133.5px" width="10" height="9" viewBox="0 0 10 9"><path d="M1,1 h8 L6,5 v4 h-2 v-4 Z" fill="#3a80d0" stroke="#1a4080" stroke-width="0.6"/></svg>
<div class="dd" style="left:16px;top:137px;border-top-color:#222"></div>
<div class="st" style="left:2px">SolidWorks Premium 2014 x64 Edition</div>
<div class="st" style="left:957px">Fully Defined</div>
<div class="st" style="left:1037px">Editing Assembly</div>
<div class="st" style="left:1162px">MMGS</div>
<div class="dd" style="left:1207px;top:710px;border-top:none;border-bottom:3px solid #333"></div>
<svg class="a" style="left:1223.0px;top:702.5px" width="10" height="11" viewBox="0 0 10 11"><path d="M1,1 h8 v9 h-8 Z" fill="#f0fff0" stroke="#20a040" stroke-width="0.9"/><text x="2.5" y="8.5" font-size="8" font-weight="bold" fill="#108030" font-family="Liberation Sans">?</text></svg>
<svg class="a" style="left:1264.0px;top:702.0px" width="12" height="12" viewBox="0 0 12 12"><path d="M2,10 L9,3 Q11,1 12,3 Q12,5 10,6 L4,11 Q2,12 2,10 Z" fill="#f0c830" stroke="#906010" stroke-width="0.8"/></svg>
<div class="a" style="left:0;top:145px;width:164px;height:210px;overflow:hidden">
<div class="tr" style="left:15px;top:2.5px">Assem2&nbsp;&nbsp;(Default&lt;Display St</div>
<div class="tr" style="left:30px;top:21.2px">History</div>
<div class="tr" style="left:30px;top:38.0px">Sensors</div>
<div class="tr" style="left:30px;top:55.0px">Annotations</div>
<div class="tr" style="left:30px;top:72.0px">Front Plane</div>
<div class="tr" style="left:30px;top:89.5px">Top Plane</div>
<div class="tr" style="left:30px;top:106.8px">Right Plane</div>
<div class="tr" style="left:30px;top:124.0px">Origin</div>
<div class="tr" style="left:30px;top:141.5px">(f) Bucket body&lt;1&gt; (Defa</div>
<div class="tr" style="left:30px;top:158.5px">Assem1&lt;1&gt; (Default&lt;Dis</div>
<div class="tr" style="left:30px;top:176.0px">Mates</div>
<div class="tr" style="left:30px;top:193.5px">LocalLPattern1</div>
</div>
<svg class="a" style="left:0;top:160px" width="30" height="195"><path d="M7,5 V190" stroke="#aaa" stroke-width="1" stroke-dasharray="1 2"/><path d="M7,13.699999999999989 H15" stroke="#aaa" stroke-dasharray="1 2"/><path d="M7,30.5 H15" stroke="#aaa" stroke-dasharray="1 2"/><path d="M7,47.5 H15" stroke="#aaa" stroke-dasharray="1 2"/><path d="M7,64.5 H15" stroke="#aaa" stroke-dasharray="1 2"/><path d="M7,82 H15" stroke="#aaa" stroke-dasharray="1 2"/><path d="M7,99.30000000000001 H15" stroke="#aaa" stroke-dasharray="1 2"/><path d="M7,116.5 H15" stroke="#aaa" stroke-dasharray="1 2"/><path d="M7,134 H15" stroke="#aaa" stroke-dasharray="1 2"/><path d="M7,151 H15" stroke="#aaa" stroke-dasharray="1 2"/><path d="M7,168.5 H15" stroke="#aaa" stroke-dasharray="1 2"/><path d="M7,186 H15" stroke="#aaa" stroke-dasharray="1 2"/></svg>
<div class="a" style="left:3px;top:169.7px;width:9px;height:9px;background:#f4f4f4;border:1px solid #a0a0a0;font-size:9px;line-height:7px;text-align:center;color:#666">+</div>
<div class="a" style="left:3px;top:203.5px;width:9px;height:9px;background:#f4f4f4;border:1px solid #a0a0a0;font-size:9px;line-height:7px;text-align:center;color:#666">+</div>
<div class="a" style="left:3px;top:290.0px;width:9px;height:9px;background:#f4f4f4;border:1px solid #a0a0a0;font-size:9px;line-height:7px;text-align:center;color:#666">+</div>
<div class="a" style="left:3px;top:307.0px;width:9px;height:9px;background:#f4f4f4;border:1px solid #a0a0a0;font-size:9px;line-height:7px;text-align:center;color:#666">+</div>
<div class="a" style="left:3px;top:324.5px;width:9px;height:9px;background:#f4f4f4;border:1px solid #a0a0a0;font-size:9px;line-height:7px;text-align:center;color:#666">+</div>
<div class="a" style="left:3px;top:342.0px;width:9px;height:9px;background:#f4f4f4;border:1px solid #a0a0a0;font-size:9px;line-height:7px;text-align:center;color:#666">+</div>
<svg class="a" style="left:1.0px;top:148.0px" width="14" height="14" viewBox="0 0 14 14"><path d="M1,5 L7,1 L13,4 L7,8 Z" fill="#a0e060" stroke="#204010" stroke-width="0.7"/><path d="M1,5 L7,8 L7,13 L1,10 Z" fill="#f0d040" stroke="#204010" stroke-width="0.7"/><path d="M7,8 L13,4 L13,9 L7,13 Z" fill="#30a020" stroke="#204010" stroke-width="0.7"/></svg>
<svg class="a" style="left:14.0px;top:166.0px" width="14" height="14" viewBox="0 0 14 14"><path d="M1,2 h12 v10 h-12 Z" fill="#f0d060" stroke="#906010" stroke-width="0.8"/><circle cx="8" cy="7" r="3" fill="#fff" stroke="#333" stroke-width="0.8"/></svg>
<svg class="a" style="left:14.0px;top:183.0px" width="14" height="14" viewBox="0 0 14 14"><path d="M1,2 h12 v10 h-12 Z" fill="#f0d060" stroke="#906010" stroke-width="0.8"/><circle cx="7" cy="7" r="2.5" fill="none" stroke="#333" stroke-width="0.8"/></svg>
<svg class="a" style="left:14.0px;top:200.0px" width="14" height="14" viewBox="0 0 14 14"><path d="M1,2 h12 v10 h-12 Z" fill="#f0d060" stroke="#906010" stroke-width="0.8"/><text x="4" y="11" font-size="9" font-weight="bold" fill="#222" font-family="Liberation Sans">A</text></svg>
<svg class="a" style="left:14.0px;top:217.0px" width="14" height="14" viewBox="0 0 14 14"><path d="M2,6 L7,2 L12,7 L7,11 Z" fill="none" stroke="#777" stroke-width="0.8"/><path d="M3,3 L11,11" stroke="#777" stroke-width="0.7"/></svg>
<svg class="a" style="left:14.0px;top:235.0px" width="14" height="14" viewBox="0 0 14 14"><path d="M2,6 L7,2 L12,7 L7,11 Z" fill="none" stroke="#777" stroke-width="0.8"/><path d="M3,3 L11,11" stroke="#777" stroke-width="0.7"/></svg>
<svg class="a" style="left:14.0px;top:252.0px" width="14" height="14" viewBox="0 0 14 14"><path d="M2,6 L7,2 L12,7 L7,11 Z" fill="none" stroke="#777" stroke-width="0.8"/><path d="M3,3 L11,11" stroke="#777" stroke-width="0.7"/></svg>
<svg class="a" style="left:14.0px;top:269.0px" width="14" height="14" viewBox="0 0 14 14"><path d="M5,2 V11 H11" fill="none" stroke="#b02020" stroke-width="1"/><path d="M5,2 L3,5 M11,11 L8,9" stroke="#333" stroke-width="0.8"/></svg>
<svg class="a" style="left:14.0px;top:286.0px" width="14" height="14" viewBox="0 0 14 14"><path d="M2,6 L7,2 L13,5 L13,10 L8,13 L2,10 Z" fill="#f0d040" stroke="#604000" stroke-width="0.8"/><path d="M2,6 L8,9 L13,5 M8,9 V13" fill="none" stroke="#604000" stroke-width="0.7"/></svg>
<svg class="a" style="left:14.0px;top:304.0px" width="14" height="14" viewBox="0 0 14 14"><path d="M1,5 L7,1 L13,4 L7,8 Z" fill="#a0e060" stroke="#204010" stroke-width="0.7"/><path d="M1,5 L7,8 L7,13 L1,10 Z" fill="#f0d040" stroke="#204010" stroke-width="0.7"/><path d="M7,8 L13,4 L13,9 L7,13 Z" fill="#30a020" stroke="#204010" stroke-width="0.7"/></svg>
<svg class="a" style="left:14.0px;top:321.0px" width="14" height="14" viewBox="0 0 14 14"><path d="M2,3 Q2,1 4,1 Q6,1 6,3 V11 Q4,13 2,11 Z M8,3 Q8,1 10,1 Q12,1 12,3 V11 Q10,13 8,11 Z" fill="#e8e8e8" stroke="#555" stroke-width="0.8"/></svg>
<svg class="a" style="left:14.0px;top:339.0px" width="14" height="14" viewBox="0 0 14 14"><path d="M3,2 Q6,4 3,7 Q6,9 3,12" fill="none" stroke="#444" stroke-width="1.2"/><path d="M9,2 v10 M9,2 h3 M9,7 h3 M9,12 h3" stroke="#444" stroke-width="1"/><circle cx="12" cy="4" r="1.5" fill="#f0c020"/></svg>
<div class="a" style="left:0;top:354px;width:164px;height:1px;background:#3c6a9c"></div>
<div class="a" style="left:0;top:686px;width:164px;height:14px;background:#eceef0;border-top:1px solid #d8dade"></div>
<div class="a" style="left:14px;top:687px;width:78px;height:11px;background:#e0e2e6;border:1px solid #b8bbc0;border-radius:2px"></div>
<div class="a" style="left:50px;top:689px;font-size:8px;line-height:8px;color:#888">|||</div>
<svg class="a" style="left:5.0px;top:689.0px" width="6" height="8" viewBox="0 0 6 8"><path d="M5,0 L1,4 L5,8 Z" fill="#777"/></svg>
<svg class="a" style="left:155.0px;top:689.0px" width="6" height="8" viewBox="0 0 6 8"><path d="M1,0 L5,4 L1,8 Z" fill="#777"/></svg>
<div class="a" style="left:165px;top:385px;width:5px;height:26px;background:#f4f4f4;border:1px solid #9a9a9a;border-left:none"></div>
<svg class="a" style="left:166.0px;top:388.0px" width="4" height="20" viewBox="0 0 4 20"><path d="M3,3 L1,4 L3,5 M3,9 L1,10 L3,11 M3,15 L1,16 L3,17" fill="none" stroke="#555" stroke-width="0.8"/></svg>
<svg class="a" style="left:170px;top:625px" width="60" height="60" viewBox="170 625 60 60"><path d="M201,658 L205,644" stroke="#2a7a2a" stroke-width="3"/><path d="M201,646 L205,638 L208,647 Z" fill="#3a9a3a"/><path d="M201,658 L190,663" stroke="#1a1aa0" stroke-width="3"/><path d="M193,660 L184,666 L190,667 Z" fill="#1010c0" stroke="#1010c0" stroke-width="2"/><path d="M201,658 L213,667" stroke="#a02a2a" stroke-width="3"/><path d="M210,662 L218,671 L209,669 Z" fill="#c04040" stroke="#c04040" stroke-width="1.5"/><text x="202" y="638" font-size="8" fill="#888" font-family="Liberation Sans">Y</text><text x="178" y="670" font-size="8" fill="#4a4a9a" font-family="Liberation Sans">Z</text><text x="216" y="677" font-size="8" fill="#a06060" font-family="Liberation Sans">X</text></svg>
<svg class="a" style="left:0;top:0" width="1280" height="720" viewBox="0 0 1280 720">
<defs>
<linearGradient id="floorG" gradientUnits="userSpaceOnUse" x1="470" y1="250" x2="600" y2="570">
<stop offset="0" stop-color="#6c5200"/>
<stop offset="0.06" stop-color="#7c5f00"/>
<stop offset="0.15" stop-color="#b48a00"/>
<stop offset="0.24" stop-color="#e6b800"/>
<stop offset="0.33" stop-color="#fad400"/>
<stop offset="0.48" stop-color="#ffdf00"/>
<stop offset="0.68" stop-color="#fcd000"/>
<stop offset="0.88" stop-color="#f2b800"/>
<stop offset="1" stop-color="#f4c000"/>
</linearGradient>
<linearGradient id="toothTop" gradientUnits="userSpaceOnUse" x1="-72" y1="-30" x2="0" y2="-5">
<stop offset="0" stop-color="#b4b0ac"/>
<stop offset="0.55" stop-color="#dcd8d4"/>
<stop offset="1" stop-color="#f4f2f0"/>
</linearGradient>
<linearGradient id="bandG" x1="0" y1="0" x2="0" y2="1">
<stop offset="0" stop-color="#ffd800"/>
<stop offset="0.6" stop-color="#f0c000"/>
<stop offset="1" stop-color="#c09000"/>
</linearGradient>
<linearGradient id="barBot1" gradientUnits="userSpaceOnUse" x1="0" y1="250" x2="0" y2="285">
<stop offset="0" stop-color="#e8b400"/>
<stop offset="1" stop-color="#b88800"/>
</linearGradient>
<linearGradient id="barBot2" gradientUnits="userSpaceOnUse" x1="0" y1="205" x2="0" y2="245">
<stop offset="0" stop-color="#e8b400"/>
<stop offset="1" stop-color="#b88800"/>
</linearGradient>
<linearGradient id="barG" gradientUnits="userSpaceOnUse" x1="0" y1="0" x2="0.3" y2="1">
<stop offset="0" stop-color="#f0c000"/>
<stop offset="1" stop-color="#d8a400"/>
</linearGradient>

<g id="tooth" stroke="#1e1c1a" stroke-width="0.8" stroke-linejoin="round">
<path fill="#3a3836" d="M-115.4,-33.6 L-100.6,-23.3 L-83.5,-14.3 L-82.4,4 L-72,6 L-72,-27 L-83.5,-27.9 Z"/>
<path fill="#4e4c4a" d="M-117.7,-36.4 L-116,-40 L-65.3,-37 L-63,-34.8 L-72,-27 L-83.5,-27.9 L-115.4,-33.6 Z"/>
<path fill="#d6d6d6" stroke="none" d="M-102,-39.3 L-86,-38.4 L-83,-28.5 L-98,-31.2 Z"/>
<path fill="#7a7876" stroke="none" d="M-83.5,-27.9 L-65.3,-36.5 L-63.5,-34.8 L-72,-27 Z"/>
<path fill="#8a8886" d="M-82,-29.5 L-77.5,-30 L-77.5,4.5 L-82,4 Z"/>
<path fill="#4c4846" d="M-72.1,-21.1 L-49.3,-11.9 L-9.5,-0.6 L-1.6,-1.7 L-0.4,4 L-0.4,5.1 L-9.5,9.7 L-49.3,11.9 L-72.1,6.2 Z"/>
<path fill="#6a6662" stroke="none" d="M-38,-4 L-9.5,1.7 L-9.5,4.5 L-38,-0.4 Z"/>
<path fill="url(#toothTop)" d="M-72.1,-21.1 L-55,-31.3 L-30,-22.2 L-15.2,-7.4 L-1.6,-1.7 L-9.5,-0.6 L-49.3,-11.9 Z"/>
<path fill="#9a9896" d="M-74,-24 L-55,-33 L-55,-31 L-72,-21.5 Z"/>
<path fill="#a09e9c" d="M-74.5,-22 L-71,-23 L-71,6 L-74.5,5.5 Z"/>
<path fill="none" stroke="#1e1c1a" stroke-width="0.7" d="M-49.3,-11.9 L-49.3,11.9 M-38,-4 L-38,10.5 M-9.5,-0.6 L-9.5,9.7"/>
</g>
</defs>
<g stroke="#2a1a00" stroke-width="1" stroke-linejoin="round">
<path fill="#ffd400" d="M560.0,240.0 L600.0,200.0 L649.0,131.0 L655.0,125.0 L665.0,123.0 L672.5,123.8 L690.0,130.0 L697.5,136.0 L701.0,142.5 L709.4,171.7 L717.5,200.0 L734.2,260.0 L742.8,285.6 L748.3,314.4 L766.6,345.0 L791.0,381.6 L821.6,427.4 L852.1,470.2 L877.0,506.0 L871.0,510.0 L831.0,502.2 L776.0,482.0 L740.0,476.0 L700.0,461.0 L640.0,427.0 L560.0,387.0 Z"/>
<path fill="#8b6c00" stroke="none" d="M562.0,240.0 L602.0,200.0 L650.5,132.5 L656.0,127.0 L665.0,125.2 L672.0,125.8 L689.0,131.8 L695.5,137.5 L698.5,143.5 L705.6,172.5 L712.5,201.0 L729.7,261.0 L738.3,286.5 L744.0,315.5 L762.6,346.5 L787.0,383.0 L817.6,428.8 L848.0,471.6 L870.0,503.0 L831.0,500.5 L776.0,481.0 L740.0,475.0 L700.0,460.0 L640.0,426.0 L562.0,386.0 Z"/>
<path fill="url(#floorG)" d="M425.0,262.0 L470.0,255.0 L540.0,232.0 L600.0,215.0 L606.0,225.0 L602.0,232.0 L592.0,252.0 L586.7,264.4 L582.0,280.0 L581.0,295.0 L583.0,312.0 L588.0,330.0 L596.0,348.0 L608.0,366.0 L624.0,386.0 L641.0,403.0 L656.0,417.0 L672.0,431.0 L688.0,443.0 L704.0,453.0 L720.0,462.0 L736.0,469.5 L752.0,475.3 L776.0,481.0 L577.0,581.0 L560.0,590.0 L535.0,544.0 L498.0,470.0 L465.0,397.0 L448.0,330.0 L425.0,280.0 Z"/>
<path fill="#ffd400" d="M565.0,587.0 L775.6,479.0 L793.3,489.0 L576.0,600.0 Z"/>
<path fill="#f0b000" d="M576.0,600.0 L793.3,490.0 L831.0,502.2 L875.6,505.6 L870.0,515.0 L841.0,517.0 L634.0,623.0 L590.0,640.0 Z"/>
<path fill="#ffd000" d="M600.0,628.0 L634.0,623.0 L841.0,517.0 L870.0,511.0 L876.0,520.0 L860.0,534.0 L669.0,633.0 L610.0,650.0 Z"/>
<path fill="none" d="M588,598 L793,492"/>
<path fill="#ffd800" d="M665.6,199.4 L680.0,189.0 L700.0,249.0 L698.9,250.0 Z"/>
<path fill="#6e5600" d="M658.9,198.9 L665.6,198.9 L699.0,249.0 L700.0,251.1 L695.6,253.3 Z"/>
<path fill="#e6ae00" d="M622.0,144.0 L685.0,132.5 L691.0,138.8 L692.5,147.5 L692.5,180.0 L682.5,187.5 L640.0,196.0 Z"/>
<path fill="#ffd800" stroke="none" d="M630.0,154.0 L691.0,138.8 L692.5,147.5 L635.0,162.0 Z"/>
<path fill="#d8a400" stroke="none" d="M640.0,182.0 L692.5,171.0 L692.5,180.0 L682.5,187.5 L640.0,196.0 Z"/>
<path fill="none" d="M630,154 L691,138.8 M635,162 L692.5,147.5 M640,182 L692.5,171"/>
<g transform="translate(649.6,163.4) scale(1,0.93) translate(-527.8,-206.7)"><path fill="#8b6c00" d="M422.0,262.0 L422.0,213.6 L422.8,205.0 L430.6,198.0 L442.8,192.8 L449.7,184.0 L460.0,178.0 L470.6,174.5 L479.2,174.5 L501.8,182.4 L522.6,187.6 L529.6,187.6 L547.0,188.4 L555.6,194.5 L560.8,205.0 L564.3,217.0 L564.3,231.0 L560.8,239.6 L553.9,243.0 L541.7,245.7 L538.5,230.6 L542.5,226.7 L542.5,221.4 L539.9,214.8 L534.6,208.2 L530.6,206.9 L525.0,211.0 L521.4,218.7 L516.1,238.5 L514.8,258.3 L508.2,274.2 L499.0,282.0 L494.9,283.0 L467.0,274.4 L465.3,271.0 Z"/><path fill="#f0c000" d="M463.6,178.0 L470.6,174.5 L479.2,174.5 L501.8,182.4 L522.6,187.6 L529.6,187.6 L536.5,189.3 L526.0,189.3 L498.3,185.8 Z"/><path fill="#ffd000" d="M529.6,187.6 L547.0,188.4 L555.6,194.5 L560.8,205.0 L564.3,217.0 L564.3,231.0 L560.8,239.6 L553.9,243.0 L541.7,245.7 L547.0,243.0 L552.0,234.4 L553.9,220.6 L552.0,206.7 L547.0,196.3 L536.5,189.3 Z"/><path fill="url(#bandG)" d="M530.6,206.9 L525.0,211.0 L521.4,218.7 L516.1,238.5 L514.8,258.3 L508.2,274.2 L499.0,282.0 L512.2,279.4 L522.7,263.6 L526.7,247.8 L526.7,228.0 L529.0,216.0 L533.3,209.5 Z"/></g>
<path fill="#e6ae00" d="M505.0,186.0 L589.2,157.5 L600.0,160.0 L607.2,163.0 L615.6,171.4 L617.0,177.0 L617.0,203.3 L612.8,210.3 L565.6,229.7 L516.0,248.3 L505.0,250.0 Z"/>
<path fill="#ffdc00" stroke="none" d="M505.0,204.9 L610.0,165.8 L615.6,171.4 L617.0,177.0 L505.0,213.3 Z"/>
<path fill="#eab600" stroke="none" d="M505.0,213.3 L617.0,177.0 L617.0,200.6 L505.0,239.8 Z"/>
<path fill="url(#barBot2)" stroke="none" d="M505.0,239.8 L617.0,200.6 L617.0,203.3 L612.8,210.3 L565.6,229.7 L516.0,248.3 L505.0,250.0 Z"/>
<path fill="none" d="M518.3,183.9 L592,158.9 M505,204.9 L610,165.8 M505,213.3 L617,177 M505,239.8 L617,200.6"/>
<g><path fill="#8b6c00" d="M422.0,262.0 L422.0,213.6 L422.8,205.0 L430.6,198.0 L442.8,192.8 L449.7,184.0 L460.0,178.0 L470.6,174.5 L479.2,174.5 L501.8,182.4 L522.6,187.6 L529.6,187.6 L547.0,188.4 L555.6,194.5 L560.8,205.0 L564.3,217.0 L564.3,231.0 L560.8,239.6 L553.9,243.0 L541.7,245.7 L538.5,230.6 L542.5,226.7 L542.5,221.4 L539.9,214.8 L534.6,208.2 L530.6,206.9 L525.0,211.0 L521.4,218.7 L516.1,238.5 L514.8,258.3 L508.2,274.2 L499.0,282.0 L494.9,283.0 L467.0,274.4 L465.3,271.0 Z"/><path fill="#f0c000" d="M463.6,178.0 L470.6,174.5 L479.2,174.5 L501.8,182.4 L522.6,187.6 L529.6,187.6 L536.5,189.3 L526.0,189.3 L498.3,185.8 Z"/><path fill="#ffd000" d="M529.6,187.6 L547.0,188.4 L555.6,194.5 L560.8,205.0 L564.3,217.0 L564.3,231.0 L560.8,239.6 L553.9,243.0 L541.7,245.7 L547.0,243.0 L552.0,234.4 L553.9,220.6 L552.0,206.7 L547.0,196.3 L536.5,189.3 Z"/><path fill="url(#bandG)" d="M530.6,206.9 L525.0,211.0 L521.4,218.7 L516.1,238.5 L514.8,258.3 L508.2,274.2 L499.0,282.0 L512.2,279.4 L522.7,263.6 L526.7,247.8 L526.7,228.0 L529.0,216.0 L533.3,209.5 Z"/></g>
<path fill="#e6ae00" d="M395.0,223.0 L472.8,200.4 L488.0,205.0 L495.0,210.8 L499.0,218.0 L499.0,255.3 L492.2,262.2 L436.7,278.9 L395.0,291.4 Z"/>
<path fill="#ffdc00" stroke="none" d="M395.0,243.2 L492.2,210.8 L495.0,212.0 L497.8,219.2 L395.0,254.8 Z"/>
<path fill="#eab600" stroke="none" d="M395.0,254.8 L497.8,219.2 L499.0,222.0 L499.0,245.0 L497.8,245.5 L395.0,283.6 Z"/>
<path fill="url(#barBot1)" stroke="none" d="M395.0,283.6 L497.8,245.5 L499.0,255.3 L492.2,262.2 L436.7,278.9 L395.0,291.4 Z"/>
<path fill="none" d="M403.3,224.7 L472,203 M395,243.2 L492.2,210.8 M395,254.8 L497.8,219.2 M395,283.6 L497.8,245.5"/>
<use href="#tooth" transform="translate(711.3,673) scale(1.02)"/>
<use href="#tooth" transform="translate(772.9,636) scale(1.02)"/>
<use href="#tooth" transform="translate(831.3,605.3) scale(1.0)"/>
<use href="#tooth" transform="translate(886.6,574) scale(1.0)"/>
<use href="#tooth" transform="translate(942,542.6) scale(0.99)"/>
<path fill="#8b6c00" d="M358.8,266.0 L362.5,250.0 L370.0,234.4 L376.7,225.6 L385.6,221.7 L392.2,221.1 L397.8,223.3 L414.4,231.7 L420.0,235.6 L424.4,242.2 L427.8,250.0 L436.7,290.0 L453.3,340.0 L465.7,380.0 L473.3,403.6 L483.0,428.6 L494.2,452.2 L505.3,474.4 L542.5,530.0 L580.5,590.0 L618.9,651.1 L623.3,660.0 L608.9,665.6 L570.0,644.4 L529.0,639.0 L525.0,632.0 L514.4,614.7 L506.7,613.1 L483.8,604.0 L468.5,597.9 L445.6,584.1 L428.9,576.5 L407.5,559.7 L384.8,544.5 L372.2,533.7 L359.6,521.0 L347.0,504.8 L336.0,488.6 L325.3,467.0 L318.0,447.0 L314.4,434.4 L311.2,430.0 L310.5,410.0 L311.2,390.0 L313.8,375.0 L320.0,355.0 L330.0,332.5 L340.0,312.5 L350.0,292.5 L360.0,271.0 Z"/>
<path fill="#7a5e00" d="M318.0,446.6 L330.7,473.8 L327.1,475.5 L314.4,448.3 Z M341.4,493.4 L360.4,516.9 L357.3,519.4 L338.3,495.9 Z M372.8,531.2 L394.6,549.7 L392.1,552.8 L370.3,534.3 Z M408.1,559.7 L431.0,576.5 L428.6,579.7 L405.7,562.9 Z M446.1,584.0 L469.0,597.5 L467.0,601.0 L444.1,587.5 Z M484.2,603.4 L507.1,612.4 L505.6,616.1 L482.7,607.1 Z"/>
<path fill="none" d="M324.4,440.8 L348.7,447 L359.6,458 L368.6,472.3 L381.2,488.6 L410,512 L421.2,520 L482.3,552 L503.7,599.4 L456.3,573.4 L407.5,545 L380,530 L372.2,523 L354,503 L339.7,479.6 L327,452.5 Z"/>
<path fill="none" stroke="#e8d070" stroke-width="0.8" d="M326.5,442.8 L347.7,449 L357.8,459.5 L366.8,473.8 L379.6,490.3 L408.6,513.8 L420,521.8 L480.5,553.8 L501.2,598.8"/>
<path fill="none" d="M360,266 L513,614"/>
<path fill="#8b6c00" d="M529.0,627.0 L595.6,650.0 L623.3,660.0 L608.9,665.6 L529.0,639.0 Z"/>
<path fill="#ffd000" d="M529.0,627.0 L532.0,626.0 L598.0,647.0 L612.2,652.2 L618.9,651.1 L623.3,658.0 L623.3,660.0 L595.6,650.0 Z"/>
<path fill="#ffd800" d="M385.6,223.9 L411.1,233.9 L416.7,238.9 L420.0,246.7 L429.2,280.0 L445.8,340.0 L458.0,380.0 L466.4,403.6 L476.1,428.6 L487.2,452.2 L498.3,474.4 L534.2,530.0 L572.0,590.0 L612.2,652.2 L618.9,651.1 L618.9,651.1 L580.5,590.0 L542.5,530.0 L505.3,474.4 L494.2,452.2 L483.0,428.6 L473.3,403.6 L465.7,380.0 L453.3,340.0 L436.7,290.0 L427.8,250.0 L424.4,242.2 L420.0,235.6 L414.4,231.7 L397.8,223.3 L392.2,221.1 Z"/>
<path fill="none" stroke="#1a1000" stroke-width="1.3" d="M349,399 L383,402 Q386,402 387,405 L392,434 Q392,438 389,437 L357,435 Q354,435 353,432 L347,402 Q347,399 349,399 Z"/>
<text x="0" y="0" transform="translate(353,433) skewX(12) rotate(4)" font-family="Liberation Sans" font-weight="bold" font-size="29" fill="#1a1000" stroke="#1a1000" stroke-width="1.1" textLength="30" lengthAdjust="spacingAndGlyphs">CAT</text>
</g>
</svg>
</body></html>
